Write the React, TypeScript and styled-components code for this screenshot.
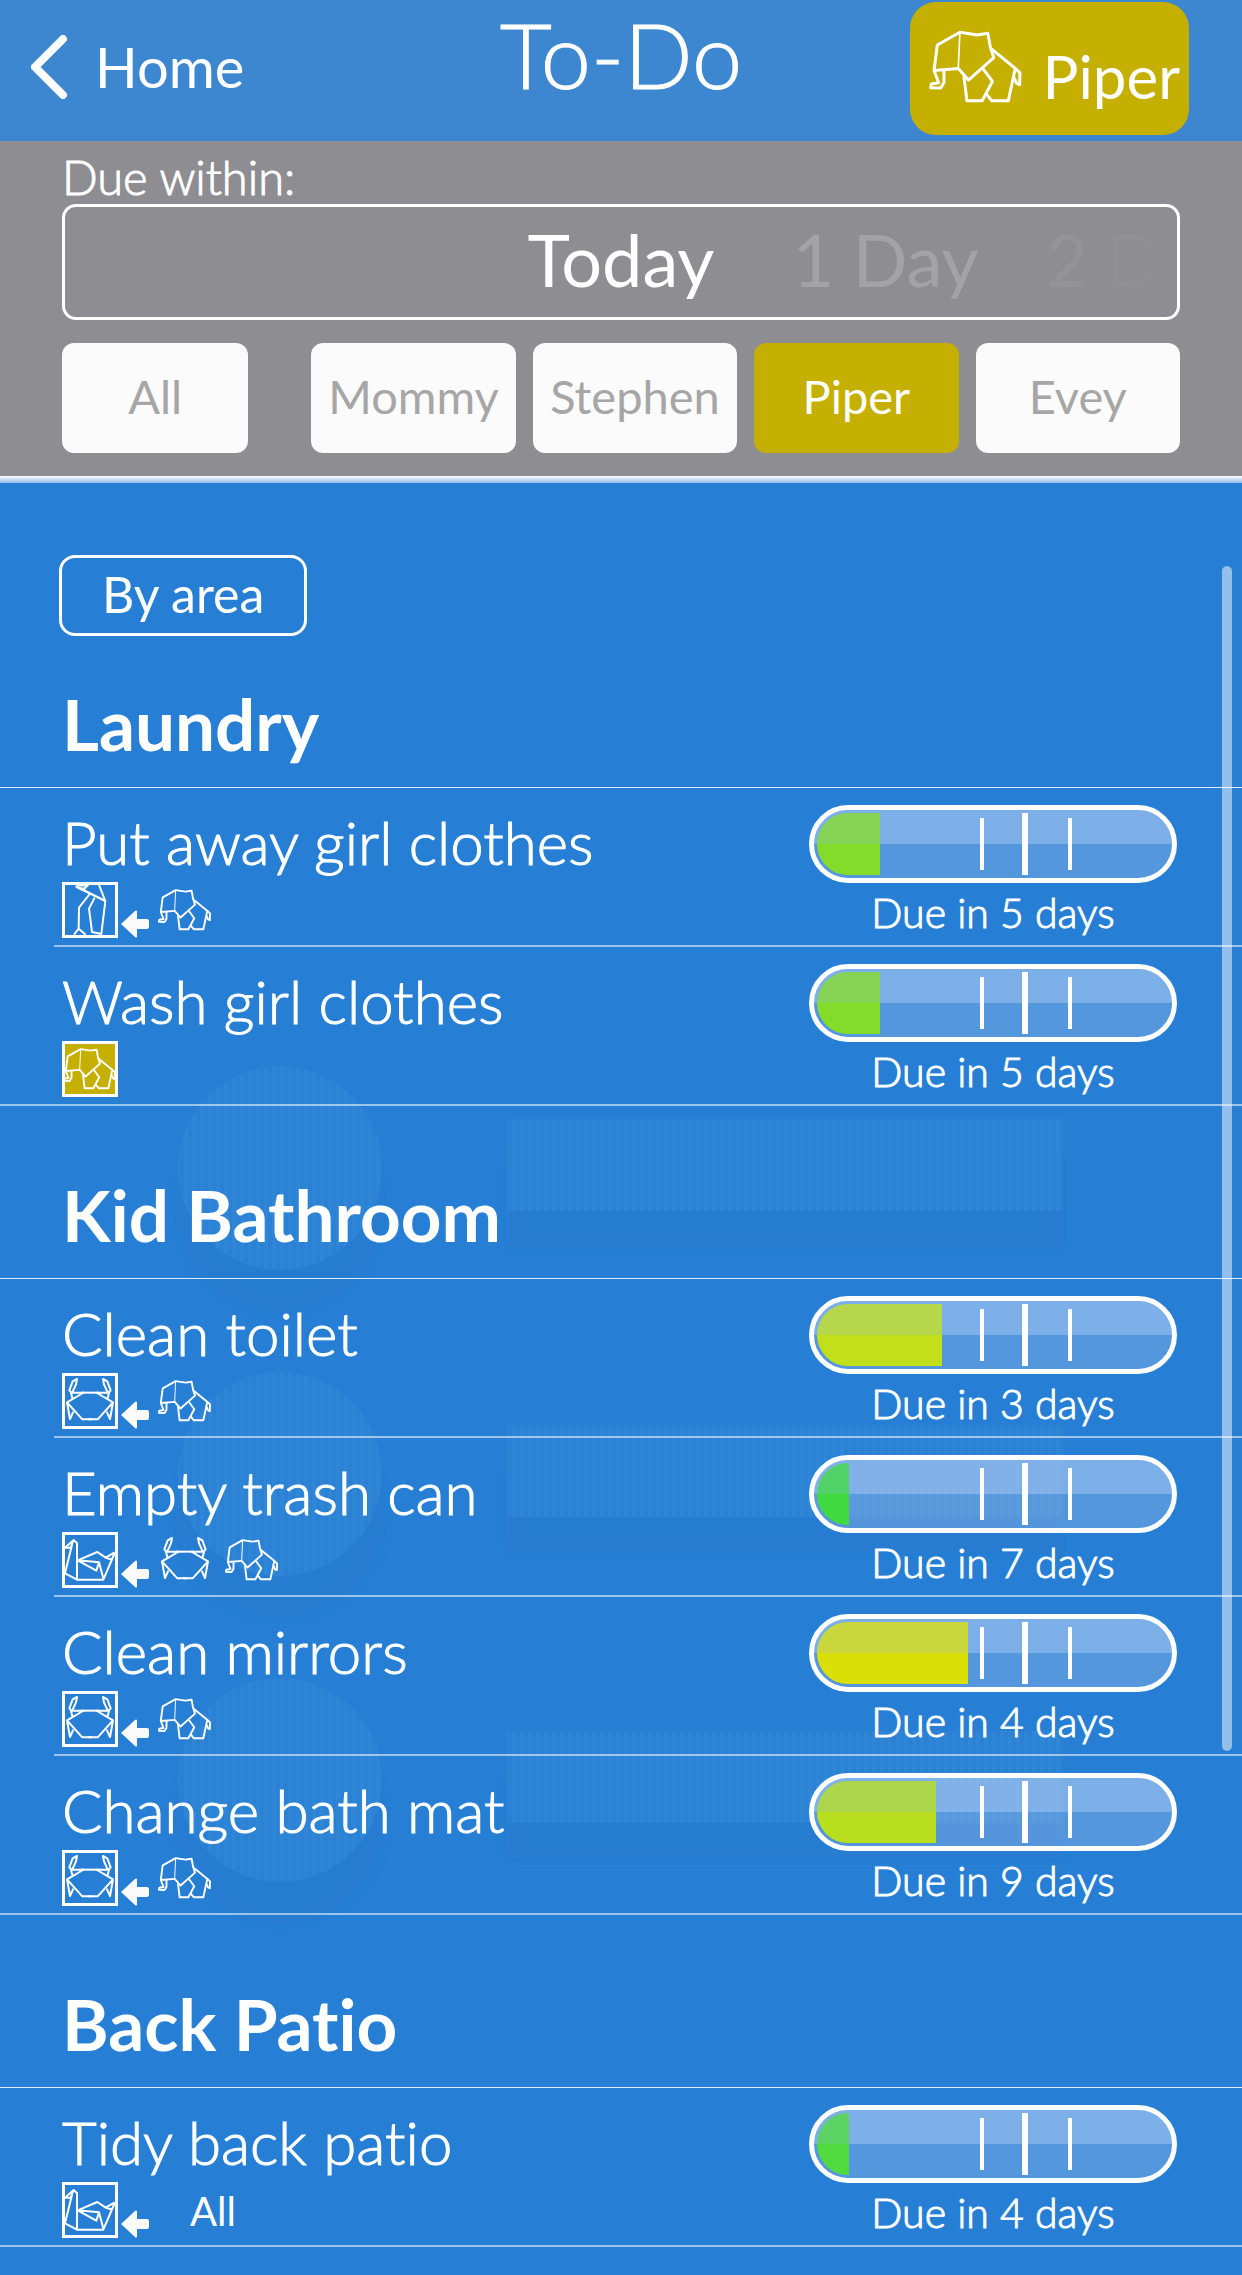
import React from 'react';
import styled, { createGlobalStyle } from 'styled-components';

const GOLD = '#c5af00';

const GlobalStyle = createGlobalStyle`
  * { box-sizing: border-box; }
  body {
    margin: 0;
    background: #267fd4;
    color: #fff;
    font-family: Lato, "Liberation Sans", sans-serif;
    font-weight: 400;
    font-variant-ligatures: none;
  }
  button { font: inherit; color: inherit; cursor: pointer; }
  h1, h2, p, ul { margin: 0; padding: 0; }
  ul { list-style: none; }
`;

const Page = styled.div`
  min-height: 100vh;
`;

/* ---------- top bar ---------- */

const TopBar = styled.header`
  display: grid;
  grid-template-columns: 1fr auto 1fr;
  align-items: start;
  height: 141px;
  padding-top: 2px;
  background: #3d86d0;
`;

const BackButton = styled.button`
  justify-self: start;
  display: flex;
  align-items: center;
  gap: 27px;
  margin: 33px 0 0 31px;
  padding: 0;
  border: 0;
  background: none;
  font-size: 56px;
  line-height: 64px;
`;

const Title = styled.h1`
  font-size: 90px;
  font-weight: 300;
  line-height: 100px;
  padding-top: 2px;
  -webkit-text-stroke: 1px #fff;
`;

const UserButton = styled.button`
  justify-self: end;
  display: flex;
  align-items: center;
  gap: 20px;
  height: 133px;
  margin-right: 53px;
  padding: 0 9px 0 18px;
  border: 0;
  border-radius: 26px;
  background: ${GOLD};
  font-size: 60px;
  line-height: 70px;

  svg { margin-bottom: 5px; }
  span { padding-top: 15px; }
`;

/* ---------- filters ---------- */

const Filters = styled.section`
  padding: 9px 62px 23px;
  background: #8e8d92;
`;

const FilterLabel = styled.p`
  font-size: 47px;
  font-weight: 300;
  line-height: 54px;
  -webkit-text-stroke: 1px #fff;
`;

const Picker = styled.div`
  display: grid;
  grid-template-columns: minmax(0, 1fr) auto minmax(0, 1fr);
  align-items: center;
  height: 116px;
  border: 3px solid #fff;
  border-radius: 14px;
  font-size: 72px;
  line-height: 82px;
`;

const PickerUpcoming = styled.div`
  grid-column: 3;
  display: flex;
  gap: 68px;
  padding-left: 78px;
  overflow: hidden;
  mask-image: linear-gradient(90deg, #000 60%, transparent);
`;

const PickerOption = styled.button<{ $level: number }>`
  grid-column: ${p => (p.$level === 0 ? 2 : 'auto')};
  flex: none;
  padding: 0 0 6px;
  border: 0;
  background: none;
  color: ${p => ['#fff', '#a3a2a6', '#99989d'][p.$level]};
  white-space: nowrap;
`;

const People = styled.div`
  display: flex;
  gap: 17px;
  margin-top: 23px;
`;

const PersonButton = styled.button<{ $active?: boolean; $everyone?: boolean }>`
  flex: ${p => (p.$everyone ? '186 1 0' : '204 1 0')};
  margin-right: ${p => (p.$everyone ? '46px' : '0')};
  min-width: 0;
  height: 110px;
  padding: 0 0 4px;
  border: 0;
  border-radius: 12px;
  background: ${p => (p.$active ? GOLD : '#fbfbfb')};
  color: ${p => (p.$active ? '#fff' : '#a6a6a6')};
  font-size: 47px;
  line-height: 54px;
`;

const Edge = styled.div`
  height: 7px;
  background: linear-gradient(#fff, #8fbce8);
`;

/* ---------- list ---------- */

const List = styled.main`
  position: relative;
  padding: 72px 0 29px;
`;

const Artwork = styled.svg`
  position: absolute;
  top: 0;
  left: 0;
  pointer-events: none;
`;

const ScrollThumb = styled.div`
  position: absolute;
  top: 83px;
  right: 10px;
  width: 10px;
  height: 1185px;
  border-radius: 5px;
  background: rgba(255, 255, 255, 0.5);
`;

const SortButton = styled.button`
  position: relative;
  display: block;
  height: 81px;
  margin-left: 59px;
  padding: 0 40px 3px;
  border: 3px solid #fff;
  border-radius: 16px;
  background: none;
  font-size: 50px;
  line-height: 58px;
`;

const Section = styled.section`
  position: relative;

  & + & { padding-top: 21px; }
`;

const AreaName = styled.h2`
  padding: 47px 62px 22px;
  border-bottom: 1px solid rgba(255, 255, 255, 0.85);
  font-size: 71px;
  font-weight: 700;
  line-height: 82px;
`;

const Task = styled.li`
  display: flex;
  justify-content: space-between;
  height: 159px;
  margin-left: 54px;
  padding: 17px 65px 0 8px;
  border-bottom: 2px solid rgba(255, 255, 255, 0.55);

  &:last-child {
    margin-left: 0;
    padding-left: 62px;
  }
`;

const TaskInfo = styled.div`
  display: flex;
  flex-direction: column;
  gap: 4px;
  padding-top: 2px;
`;

const TaskName = styled.p`
  font-size: 60px;
  font-weight: 300;
  line-height: 71px;
  white-space: nowrap;
  -webkit-text-stroke: 1px #fff;
`;

const Assignees = styled.div`
  display: flex;
  align-items: flex-end;
`;

const CurrentBox = styled.span<{ $gold?: boolean }>`
  display: block;
  width: 56px;
  height: 56px;
  background: ${p => (p.$gold ? GOLD : 'transparent')};
  box-shadow: inset 0 0 0 3px #fff;

  svg { display: block; }
`;

const ArrowIcon = styled.svg`
  margin: 0 8px 0 3px;
`;

const Queue = styled.span`
  display: flex;
  gap: 11px;
`;

const Everyone = styled.span`
  padding-left: 33px;
  font-size: 40px;
  line-height: 58px;
  height: 56px;
`;

const Status = styled.div`
  display: flex;
  flex-direction: column;
  align-items: center;
  gap: 5px;
  width: 368px;
`;

const Gauge = styled.div`
  position: relative;
  width: 368px;
  height: 78px;
  padding: 3px;
  border: 5px solid #fff;
  border-radius: 39px;
  background: linear-gradient(rgba(255, 245, 255, 0.38) 50%, rgba(255, 240, 255, 0.21) 50%);
  overflow: hidden;

  &::after {
    content: '';
    position: absolute;
    inset: 0 0 50%;
    background: rgba(141, 188, 246, 0.22);
  }
`;

const GaugeTrack = styled.div`
  height: 62px;
  border-radius: 31px;
  overflow: hidden;
`;

const GaugeFill = styled.div`
  height: 100%;
`;

const Tick = styled.i<{ $left: number; $major?: boolean }>`
  position: absolute;
  z-index: 1;
  top: ${p => (p.$major ? 3 : 8)}px;
  bottom: ${p => (p.$major ? 3 : 8)}px;
  left: ${p => p.$left}px;
  width: ${p => (p.$major ? 6 : 4)}px;
  background: #fff;
`;

const DueText = styled.p`
  font-size: 41px;
  font-weight: 300;
  line-height: 49px;
  -webkit-text-stroke: 1px #fff;
`;

/* ---------- drawings ---------- */

const elephant = (
  <>
    <path d="M92 207 L102 130 L170 92 L222 100 L254 95 L262 138 L272 168 L196 236 L165 201 Z" />
    <path d="M170 92 L165 201" strokeWidth="5" />
    <path d="M92 207 L106 244 L84 248 L82 259 L112 260 L122 243 L122 205" />
    <path d="M182 222 L191 298 L237 298 L268 240 L240 202" />
    <path d="M248 276 L266 298 L316 298 L336 204" />
    <path d="M265 142 L336 200 L351 214 L350 250 L341 246 L332 226" />
  </>
);

const crabHalf = 'M61 59 H22 L16 52 L26 25 L39 18 L36 34 L25 58 M21 59 L25 76 M57 60 L9 88 L18 138 L28 116 M9 88 L55 139 H84';

type Animal = 'elephant' | 'crab' | 'swan' | 'penguin';

function AnimalIcon({ animal }: { animal: Animal }) {
  return (
    <svg width="56" height="56" viewBox="0 0 168 168" fill="none" stroke="#fff" strokeWidth="6" strokeLinejoin="round" role="img" aria-label={animal}>
      {animal === 'elephant' && (
        <g transform="translate(-41 -28) scale(0.57)" strokeWidth="10">{elephant}</g>
      )}
      {animal === 'crab' && (
        <g>
          <path d="M57 59 H111" />
          <path d={crabHalf} transform="translate(6 0)" />
          <path d={crabHalf} transform="translate(162 0) scale(-1 1)" />
        </g>
      )}
      {animal === 'swan' && (
        <path d="M9 47 L35 24 L45 33 V143 H124 L158 63 M9 47 H26 L35 24 M30 38 L9 124 L45 143 M47 85 L106 60 L131 77 L158 61 M131 77 L152 83 M47 85 L111 91 L103 116 Z M111 91 L125 143" />
      )}
      {animal === 'penguin' && (
        <>
          <path d="M43 14 L130 57" strokeWidth="7" />
          <path d="M43 14 L63 24 L78 9 H52 Z" fill="#fff" fillOpacity="0.5" />
          <path d="M111 9 L130 57 L118 156 L90 150 L81 80 L98 47 M83 36 L51 77 L50 140 L71 158 M50 140 L36 158" />
        </>
      )}
    </svg>
  );
}

function BackgroundArt() {
  return (
    <Artwork width="1242" height="1500" aria-hidden="true">
      <defs>
        <pattern id="stripes" width="8" height="8" patternUnits="userSpaceOnUse">
          <rect width="8" height="8" fill="#fff" fillOpacity="0.025" />
          <rect width="4" height="8" fill="#fff" fillOpacity="0.02" />
        </pattern>
        <filter id="soft" x="-20%" y="-20%" width="140%" height="140%">
          <feGaussianBlur stdDeviation="6" />
        </filter>
      </defs>
      {[0, 306, 612].map(y => (
        <g key={y} transform={`translate(0 ${y})`}>
          <circle cx="280" cy="725" r="104" fill="#2a6fc4" fillOpacity="0.18" filter="url(#soft)" />
          <rect x="507" y="676" width="556" height="88" fill="#2a6fc4" fillOpacity="0.18" filter="url(#soft)" />
          <circle cx="280" cy="685" r="102" fill="#267fd4" />
          <rect x="507" y="636" width="556" height="92" fill="#267fd4" />
          <circle cx="280" cy="685" r="102" fill="url(#stripes)" />
          <rect x="507" y="636" width="556" height="92" fill="url(#stripes)" />
        </g>
      ))}
    </Artwork>
  );
}

/* ---------- data ---------- */

interface TaskData {
  name: string;
  current: Animal;
  queue: Animal[] | 'All';
  days: number;
  fill: number;
  color: string;
}

const areas: { name: string; tasks: TaskData[] }[] = [
  {
    name: 'Laundry',
    tasks: [
      { name: 'Put away girl clothes', current: 'penguin', queue: ['elephant'], days: 5, fill: 18, color: '#84dc2a' },
      { name: 'Wash girl clothes', current: 'elephant', queue: [], days: 5, fill: 18, color: '#84dc2a' },
    ],
  },
  {
    name: 'Kid Bathroom',
    tasks: [
      { name: 'Clean toilet', current: 'crab', queue: ['elephant'], days: 3, fill: 35.5, color: '#c2df1c' },
      { name: 'Empty trash can', current: 'swan', queue: ['crab', 'elephant'], days: 7, fill: 9, color: '#40d940' },
      { name: 'Clean mirrors', current: 'crab', queue: ['elephant'], days: 4, fill: 43, color: '#dadf08' },
      { name: 'Change bath mat', current: 'crab', queue: ['elephant'], days: 9, fill: 33.8, color: '#b8de1e' },
    ],
  },
  {
    name: 'Back Patio',
    tasks: [
      { name: 'Tidy back patio', current: 'swan', queue: 'All', days: 4, fill: 9, color: '#50da3e' },
    ],
  },
];

function TaskRow({ task }: { task: TaskData }) {
  const hasQueue = task.queue.length > 0;
  return (
    <Task>
      <TaskInfo>
        <TaskName>{task.name}</TaskName>
        <Assignees>
          <CurrentBox $gold={!hasQueue}>
            <AnimalIcon animal={task.current} />
          </CurrentBox>
          {hasQueue && (
            <ArrowIcon width="28" height="28" viewBox="0 0 28 28" fill="#fbfbfb" aria-hidden="true">
              <path d="M0 14 L14 1 Q15 0 16 1 V9 H26 Q28 9 28 11 V17 Q28 19 26 19 H16 V27 Q15 28 14 27 Z" />
            </ArrowIcon>
          )}
          {task.queue === 'All' ? (
            <Everyone>All</Everyone>
          ) : (
            <Queue>
              {task.queue.map(a => <AnimalIcon key={a} animal={a} />)}
            </Queue>
          )}
        </Assignees>
      </TaskInfo>
      <Status>
        <Gauge role="meter" aria-label={task.name} aria-valuemin={0} aria-valuemax={100} aria-valuenow={task.fill}>
          <GaugeTrack>
            <GaugeFill style={{ width: `${task.fill}%`, background: task.color }} />
          </GaugeTrack>
          <Tick $left={166} />
          <Tick $left={208} $major />
          <Tick $left={254} />
        </Gauge>
        <DueText>Due in {task.days} days</DueText>
      </Status>
    </Task>
  );
}

export default function App() {
  return (
    <Page>
      <GlobalStyle />
      <TopBar>
        <BackButton type="button">
          <svg width="37" height="64" viewBox="0 0 37 64" fill="none" stroke="#fff" strokeWidth="8" strokeLinecap="round" strokeLinejoin="round" aria-hidden="true">
            <path d="M32 4 L4 32 L32 60" />
          </svg>
          Home
        </BackButton>
        <Title>To-Do</Title>
        <UserButton type="button">
          <svg width="95" height="75" viewBox="74 82 286 226" fill="none" stroke="#fff" strokeWidth="9" strokeLinejoin="round" aria-hidden="true">
            {elephant}
          </svg>
          <span>Piper</span>
        </UserButton>
      </TopBar>
      <Filters>
        <FilterLabel id="due-label">Due within:</FilterLabel>
        <Picker role="group" aria-labelledby="due-label">
          <PickerOption type="button" $level={0}>Today</PickerOption>
          <PickerUpcoming>
            <PickerOption type="button" $level={1}>1 Day</PickerOption>
            <PickerOption type="button" $level={2}>2 Days</PickerOption>
          </PickerUpcoming>
        </Picker>
        <People>
          <PersonButton type="button" $everyone>All</PersonButton>
          <PersonButton type="button">Mommy</PersonButton>
          <PersonButton type="button">Stephen</PersonButton>
          <PersonButton type="button" $active>Piper</PersonButton>
          <PersonButton type="button">Evey</PersonButton>
        </People>
      </Filters>
      <Edge />
      <List>
        <BackgroundArt />
        <SortButton type="button">By area</SortButton>
        {areas.map(area => (
          <Section key={area.name}>
            <AreaName>{area.name}</AreaName>
            <ul>
              {area.tasks.map(t => <TaskRow key={t.name} task={t} />)}
            </ul>
          </Section>
        ))}
        <ScrollThumb />
      </List>
    </Page>
  );
}
